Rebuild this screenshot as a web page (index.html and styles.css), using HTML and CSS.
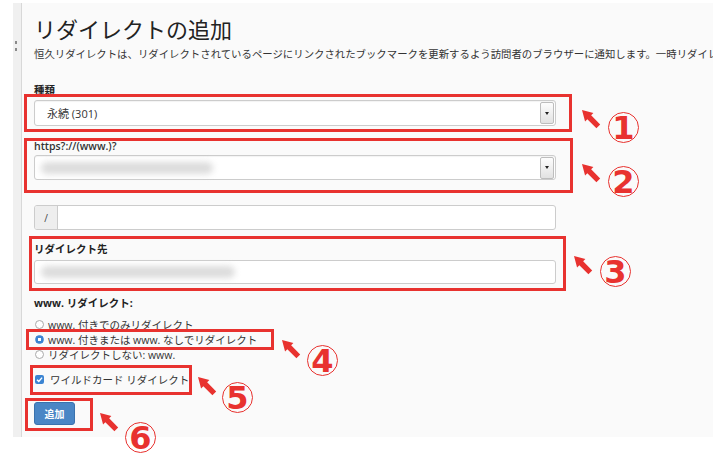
FILE: index.html
```html
<!DOCTYPE html>
<html lang="ja">
<head>
    <meta charset="UTF-8">
    <meta name="viewport" content="width=device-width, initial-scale=1.0">
    <title>リダイレクトの追加</title>
    <link rel="stylesheet" href="styles.css">
</head>
<body>
    <div class="screen">
        <div class="gutter"><span class="grip"></span><span class="grip"></span></div>
        <div class="panel">
            <h1 class="title">リダイレクトの追加</h1>
            <p class="desc">恒久リダイレクトは、リダイレクトされているページにリンクされたブックマークを更新するよう訪問者のブラウザーに通知します。一時リダイレクトはブックマークを更新しません。</p>

            <div class="label label-type">種類</div>
            <div class="select select-type">
                <span class="select-text">永続 (301)</span>
                <span class="select-btn"></span>
            </div>

            <div class="label label-domain">https?://(www.)?</div>
            <div class="select select-domain">
                <span class="select-text"><span class="blur"></span></span>
                <span class="select-btn"></span>
            </div>

            <div class="input-group">
                <span class="addon">/</span>
                <span class="input-fill"></span>
            </div>

            <div class="label label-target">リダイレクト先</div>
            <div class="input input-target"><span class="blur blur-wide"></span></div>

            <div class="label label-www">www. リダイレクト:</div>
            <div class="options">
                <div class="option"><span class="radio"></span>www. 付きでのみリダイレクト</div>
                <div class="option"><span class="radio on"></span>www. 付きまたは www. なしでリダイレクト</div>
                <div class="option"><span class="radio"></span>リダイレクトしない: www.</div>
            </div>

            <div class="option option-check">
                <span class="check"><svg viewBox="0 0 10 10" width="9" height="9"><path d="M2.2 5.2 L4.2 7.1 L7.9 2.9" fill="none" stroke="#fff" stroke-width="1.6"/></svg></span>ワイルドカード リダイレクト
            </div>

            <button class="btn">追加</button>
        </div>

        <!-- annotations -->
        <div class="box box-1"></div>
        <div class="box box-2"></div>
        <div class="box box-3"></div>
        <div class="box box-4"></div>
        <div class="box box-5"></div>
        <div class="box box-6"></div>

        <svg class="arrow arrow-1" viewBox="0 0 21 21"><polygon points="0,0 12.6,3.4 10.1,5.9 20.1,15.9 15.9,20.1 5.9,10.1 3.4,12.6"/></svg>
        <svg class="arrow arrow-2" viewBox="0 0 21 21"><polygon points="0,0 12.6,3.4 10.1,5.9 20.1,15.9 15.9,20.1 5.9,10.1 3.4,12.6"/></svg>
        <svg class="arrow arrow-3" viewBox="0 0 21 21"><polygon points="0,0 12.6,3.4 10.1,5.9 20.1,15.9 15.9,20.1 5.9,10.1 3.4,12.6"/></svg>
        <svg class="arrow arrow-4" viewBox="0 0 21 21"><polygon points="0,0 12.6,3.4 10.1,5.9 20.1,15.9 15.9,20.1 5.9,10.1 3.4,12.6"/></svg>
        <svg class="arrow arrow-5" viewBox="0 0 21 21"><polygon points="0,0 12.6,3.4 10.1,5.9 20.1,15.9 15.9,20.1 5.9,10.1 3.4,12.6"/></svg>
        <svg class="arrow arrow-6" viewBox="0 0 21 21"><polygon points="0,0 12.6,3.4 10.1,5.9 20.1,15.9 15.9,20.1 5.9,10.1 3.4,12.6"/></svg>

        <span class="num num-1">1</span>
        <span class="num num-2">2</span>
        <span class="num num-3">3</span>
        <span class="num num-4">4</span>
        <span class="num num-5">5</span>
        <span class="num num-6">6</span>
    </div>
</body>
</html>
```

FILE: styles.css
```css
body { margin: 0; background: #fff; font-family: "Open Sans", "Noto Sans CJK JP", sans-serif; color: #333; }

.screen { position: relative; display: flex; align-items: flex-start; height: 473px; padding-top: 3px; box-sizing: border-box; }
.gutter { height: 434px; margin-left: 13px; width: 8px; background: #f0f0f0; display: flex; flex-direction: column; align-items: center; padding-top: 38px; gap: 4px; box-sizing: border-box; }
.grip { width: 2px; height: 3px; background: #8a8a8a; margin-left: -2px; }
.panel { width: 692px; height: 434px; box-sizing: border-box; border-left: 1px solid #d8d8d8; background: #fafafa; padding: 12px 0 0 12px; overflow: hidden; }

.title { margin: 0; font-family: "Noto Sans CJK JP", sans-serif; font-size: 22px; line-height: 26px; font-weight: normal; color: #222; }
.desc { margin: 6px 0 0; font-size: 10.4px; line-height: 14px; white-space: nowrap; color: #333; }

.label { font-size: 10.5px; line-height: 14px; font-weight: bold; color: #222; }
.label-type { margin-top: 22px; }
.label-domain { margin-top: 13px; font-weight: 600; color: #333; }
.label-target { margin-top: 12px; }
.label-www { margin-top: 12px; }

.select { width: 522px; height: 25px; box-sizing: border-box; border: 1px solid #ccc; border-radius: 3px; background: #fff; display: flex; align-items: center; box-shadow: inset 0 1px 1px rgba(0, 0, 0, 0.05); }
.select-type { height: 26px; margin-top: 3px; }
.select-domain { margin-top: 2px; }
.select-text { flex: 1; padding-left: 12px; font-size: 11px; color: #333; }
.select-domain .select-text { padding-left: 6px; }
.select-btn { width: 14px; height: 22px; margin-right: 1px; box-sizing: border-box; border: 1px solid #bdbdbd; border-radius: 2px; background: linear-gradient(#fdfdfd, #e2e2e2); display: flex; align-items: center; justify-content: center; }
.select-btn::after { content: ""; border-left: 2px solid transparent; border-right: 2px solid transparent; border-top: 3px solid #222; }

.blur { display: block; width: 172px; height: 12px; border-radius: 6px; background: #dcdcdc; filter: blur(3px); }
.blur-wide { width: 194px; }

.input-group { display: flex; width: 522px; height: 25px; margin-top: 25px; box-sizing: border-box; border: 1px solid #ccc; border-radius: 3px; background: #fff; overflow: hidden; }
.addon { width: 22px; background: #eee; border-right: 1px solid #ccc; font-size: 10px; display: flex; align-items: center; justify-content: center; color: #444; }
.input-fill { flex: 1; }

.input { width: 522px; height: 24px; margin-top: 4px; box-sizing: border-box; border: 1px solid #ccc; border-radius: 3px; background: #fff; display: flex; align-items: center; padding-left: 6px; }

.options { margin-top: 7px; }
.option { display: flex; align-items: center; height: 15px; font-size: 10.5px; color: #333; gap: 4px; white-space: nowrap; }
.radio { width: 9px; height: 9px; margin-left: 1px; box-sizing: border-box; border: 1px solid #aaa; border-radius: 50%; background: #fff; }
.radio.on { border-color: #3b84d2; background: radial-gradient(circle, #fff 0 1.5px, #3b84d2 2px); }
.option-check { margin-top: 10px; gap: 6px; }
.check { width: 9px; height: 9px; margin-left: 1px; border-radius: 2px; background: #3b84d2; display: flex; }

.btn { display: block; margin-top: 15px; width: 41px; height: 23px; padding: 0; background: #4a86c5; border: 1px solid #3a72ad; border-radius: 3px; color: #fff; font-family: inherit; font-size: 10px; font-weight: bold; }

/* annotations */
.box { position: absolute; box-sizing: border-box; border: 3px solid #e8322f; }
.box-1 { left: 24px; top: 94px; width: 548px; height: 38px; }
.box-2 { left: 24px; top: 138px; width: 549px; height: 55px; }
.box-3 { left: 29px; top: 236px; width: 537px; height: 55px; }
.box-4 { left: 26px; top: 329px; width: 248px; height: 21px; }
.box-5 { left: 30px; top: 365px; width: 162px; height: 30px; }
.box-6 { left: 25px; top: 398px; width: 68px; height: 33px; }

.arrow { position: absolute; width: 19px; height: 19px; fill: #e8322f; }
.arrow-1 { left: 582px; top: 110px; }
.arrow-2 { left: 582px; top: 164px; }
.arrow-3 { left: 574px; top: 256px; }
.arrow-4 { left: 282px; top: 340px; }
.arrow-5 { left: 198px; top: 377px; }
.arrow-6 { left: 100px; top: 413px; }

.num { position: absolute; width: 31px; height: 31px; box-sizing: border-box; border: 1.5px solid #e8322f; border-radius: 50%; color: #e8322f; font-family: "DejaVu Sans", sans-serif; font-weight: bold; font-size: 32px; line-height: 1; display: flex; align-items: center; justify-content: center; }
.num-1 { left: 608px; top: 112px; }
.num-2 { left: 608px; top: 166px; }
.num-3 { left: 600px; top: 256px; }
.num-4 { left: 307px; top: 345px; }
.num-5 { left: 222px; top: 382px; }
.num-6 { left: 125px; top: 422px; }
```
